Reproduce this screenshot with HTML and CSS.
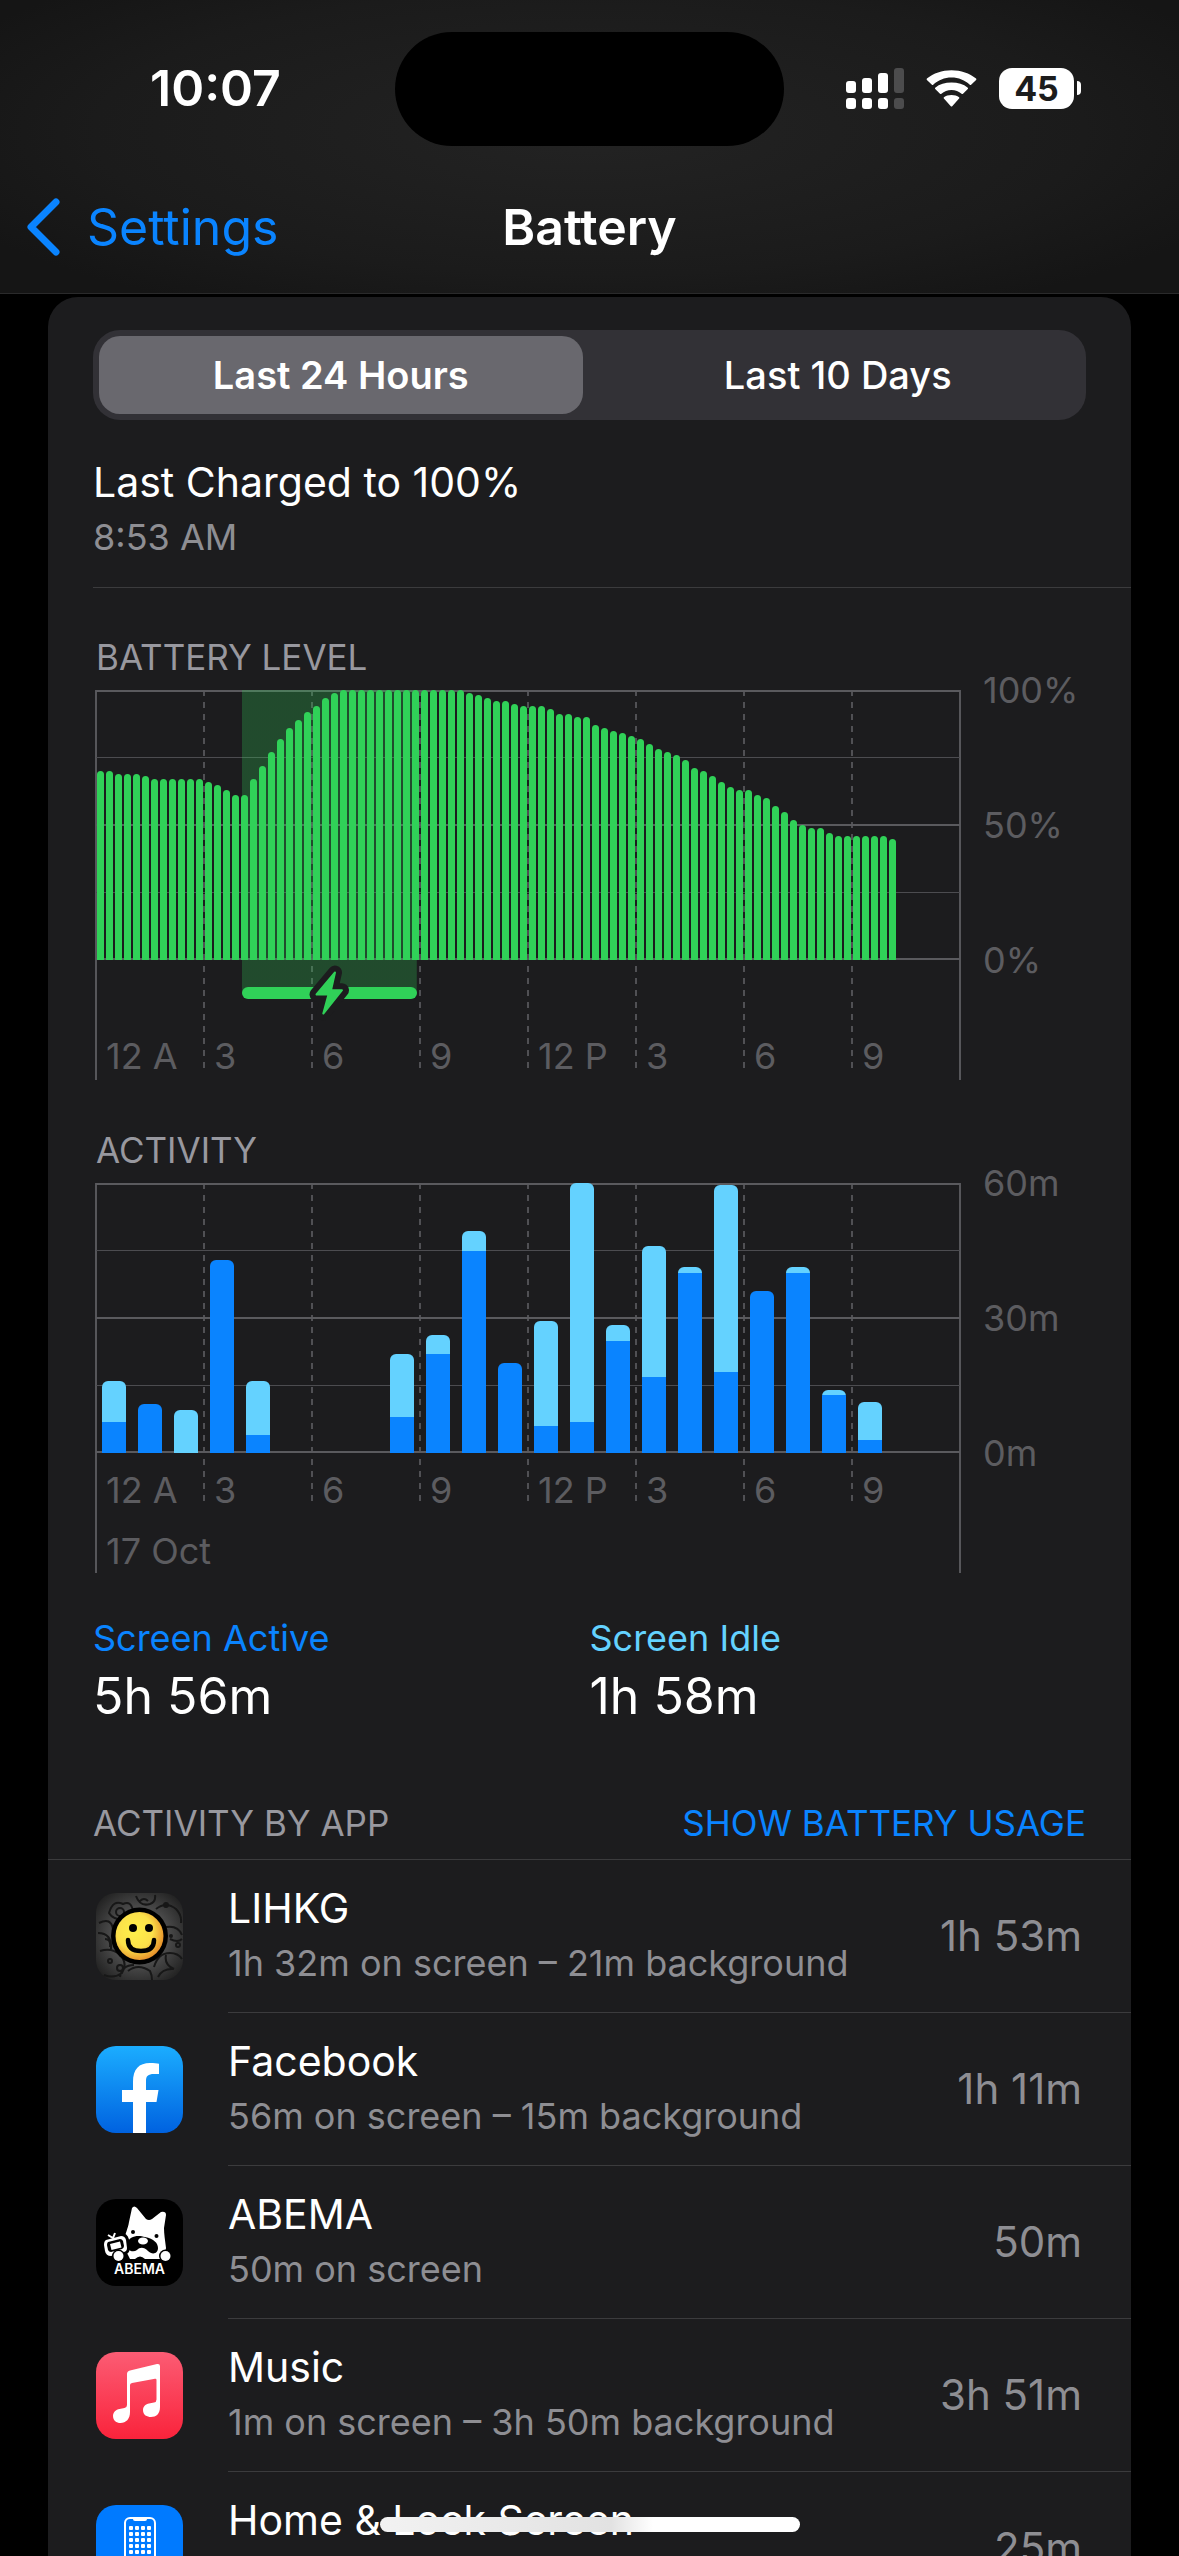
FILE: index.html
```html
<!DOCTYPE html>
<html lang="en">
<head>
<meta charset="utf-8">
<meta name="viewport" content="width=device-width, initial-scale=1">
<title>Battery</title>
<link rel="stylesheet" href="styles.css">
</head>
<body>
<div class="screen">
  <header class="top">
    <div class="status">
      <time class="clock">10:07</time>
      <div class="island"></div>
      <div class="indicators">
        <svg class="signal" viewBox="0 0 58 41" width="58" height="41" aria-label="Cellular signal">
          <g fill="#fff">
            <rect x="0" y="13" width="10" height="12" rx="3"/><rect x="16" y="10" width="10" height="15" rx="3"/><rect x="32" y="5" width="10" height="20" rx="3"/>
            <rect x="0" y="30" width="10" height="11" rx="3"/><rect x="16" y="30" width="10" height="11" rx="3"/><rect x="32" y="30" width="10" height="11" rx="3"/>
          </g>
          <g fill="#4c4c4d"><rect x="48" y="0" width="10" height="25" rx="3"/><rect x="48" y="30" width="10" height="11" rx="3"/></g>
        </svg>
        <svg class="wifi" viewBox="0 0 51 37" width="51" height="37" aria-label="Wi-Fi">
          <g fill="#fff">
            <path d="M25.500 7.500c7 0 13.500 2.700 18.300 7.200.4.400 1 .4 1.300 0l5-4.800c.4-.4.400-1 0-1.400C43.500 3.200 35 .2 25.500.2S7.500 3.200.9 8.500c-.4.400-.4 1 0 1.400l5 4.800c.4.400 1 .4 1.300 0C12 10.200 18.500 7.500 25.500 7.500z"/>
            <path d="M25.500 20c3.900 0 7.400 1.500 10.100 3.800.4.400 1 .4 1.400 0l4.800-4.700c.4-.4.400-1 0-1.400-4.300-3.500-10-5.100-16.300-5.100S13.500 14.200 9.200 17.700c-.4.400-.4 1 0 1.400l4.800 4.700c.4.400 1 .4 1.400 0C18.100 21.500 21.600 20 25.500 20z"/>
            <path d="M33.100 28.600c.4-.4.400-1 0-1.400-1.900-1.500-4.600-2.300-7.600-2.300s-5.700.8-7.600 2.300c-.4.400-.4 1 0 1.400l6.900 7.600c.4.400 1 .4 1.400 0z"/>
          </g>
        </svg>
        <div class="battery"><span class="battery-level">45</span><span class="battery-tip"></span></div>
      </div>
    </div>
    <nav class="bar">
      <a class="back" href="#">
        <svg viewBox="0 0 34 58" width="34" height="58" aria-hidden="true"><path d="M30 4 5 29l25 25" fill="none" stroke="#0a84ff" stroke-width="7" stroke-linecap="round" stroke-linejoin="round"/></svg>
        <span>Settings</span>
      </a>
      <h1>Battery</h1>
    </nav>
  </header>

  <main class="content">
    <section class="card">
      <div class="segmented" role="group" aria-label="Period">
        <button class="segment selected" type="button">Last 24 Hours</button>
        <button class="segment" type="button">Last 10 Days</button>
      </div>

      <div class="charged">
        <p class="title">Last Charged to 100%</p>
        <p class="sub">8:53 AM</p>
      </div>

      <section class="chart level">
        <h2>BATTERY LEVEL</h2>
        <div class="chart-body">
          <div class="plot">
            <div class="hours"><span>12 A</span><span>3</span><span>6</span><span>9</span><span>12 P</span><span>3</span><span>6</span><span>9</span></div>
            <div class="area">
              <div class="charging">
                <svg class="bolt" viewBox="0 0 48 60" width="48" height="60" aria-label="Charging">
                  <g stroke-linejoin="round">
                    <path d="M30 9.500 11.500 31.500h12L18.300 50.500 37 27.200H26z" fill="#1c1c1e" stroke="#1c1c1e" stroke-width="14"/>
                    <path d="M30 9.500 11.500 31.500h12L18.300 50.500 37 27.200H26z" fill="#30d158" stroke="#30d158" stroke-width="2"/>
                  </g>
                </svg>
              </div>
              <div class="bars quarter">
                <i style="height:70%"></i><i style="height:70%"></i><i style="height:69%"></i><i style="height:69%"></i><i style="height:69%"></i><i style="height:68%"></i><i style="height:67%"></i><i style="height:67%"></i><i style="height:67%"></i><i style="height:67%"></i><i style="height:67%"></i><i style="height:67%"></i>
                <i style="height:66%"></i><i style="height:65%"></i><i style="height:63%"></i><i style="height:61%"></i><i style="height:61%"></i><i style="height:67%"></i><i style="height:72%"></i><i style="height:77%"></i><i style="height:82%"></i><i style="height:86%"></i><i style="height:89%"></i><i style="height:92%"></i>
                <i style="height:94%"></i><i style="height:97%"></i><i style="height:99%"></i><i style="height:100%"></i><i style="height:100%"></i><i style="height:100%"></i><i style="height:100%"></i><i style="height:100%"></i><i style="height:100%"></i><i style="height:100%"></i><i style="height:100%"></i><i style="height:100%"></i>
                <i style="height:100%"></i><i style="height:100%"></i><i style="height:100%"></i><i style="height:100%"></i><i style="height:100%"></i><i style="height:99%"></i><i style="height:98%"></i><i style="height:97%"></i><i style="height:96%"></i><i style="height:96%"></i><i style="height:95%"></i><i style="height:94%"></i>
                <i style="height:94%"></i><i style="height:94%"></i><i style="height:93%"></i><i style="height:91%"></i><i style="height:91%"></i><i style="height:90%"></i><i style="height:90%"></i><i style="height:87%"></i><i style="height:86%"></i><i style="height:85%"></i><i style="height:84%"></i><i style="height:83%"></i>
                <i style="height:82%"></i><i style="height:80%"></i><i style="height:78%"></i><i style="height:77%"></i><i style="height:76%"></i><i style="height:74%"></i><i style="height:71%"></i><i style="height:70%"></i><i style="height:68%"></i><i style="height:66%"></i><i style="height:64%"></i><i style="height:63%"></i>
                <i style="height:63%"></i><i style="height:61%"></i><i style="height:60%"></i><i style="height:57%"></i><i style="height:55%"></i><i style="height:52%"></i><i style="height:50%"></i><i style="height:49%"></i><i style="height:49%"></i><i style="height:47%"></i><i style="height:46%"></i><i style="height:46%"></i>
                <i style="height:46%"></i><i style="height:46%"></i><i style="height:46%"></i><i style="height:46%"></i><i style="height:45%"></i>
              </div>
            </div>
          </div>
          <div class="scale"><span>100%</span><span>50%</span><span>0%</span></div>
        </div>
      </section>

      <section class="chart activity">
        <h2>ACTIVITY</h2>
        <div class="chart-body">
          <div class="plot">
            <div class="hours"><span>12 A</span><span>3</span><span>6</span><span>9</span><span>12 P</span><span>3</span><span>6</span><span>9</span></div>
            <p class="date">17 Oct</p>
            <div class="area">
              <div class="bars hourly">
                <div><i style="height:41px"></i><b style="height:31px"></b></div>
                <div><b style="height:49px"></b></div>
                <div><i style="height:43px"></i></div>
                <div><b style="height:193px"></b></div>
                <div><i style="height:54px"></i><b style="height:18px"></b></div>
                <div></div>
                <div></div>
                <div></div>
                <div><i style="height:63px"></i><b style="height:36px"></b></div>
                <div><i style="height:19px"></i><b style="height:99px"></b></div>
                <div><i style="height:20px"></i><b style="height:202px"></b></div>
                <div><b style="height:90px"></b></div>
                <div><i style="height:105px"></i><b style="height:27px"></b></div>
                <div><i style="height:239px"></i><b style="height:31px"></b></div>
                <div><i style="height:16px"></i><b style="height:112px"></b></div>
                <div><i style="height:131px"></i><b style="height:76px"></b></div>
                <div><i style="height:6px"></i><b style="height:180px"></b></div>
                <div><i style="height:187px"></i><b style="height:81px"></b></div>
                <div><b style="height:162px"></b></div>
                <div><i style="height:6px"></i><b style="height:180px"></b></div>
                <div><i style="height:5px"></i><b style="height:58px"></b></div>
                <div><i style="height:38px"></i><b style="height:13px"></b></div>
                <div></div>
                <div></div>
              </div>
            </div>
          </div>
          <div class="scale"><span>60m</span><span>30m</span><span>0m</span></div>
        </div>
      </section>

      <dl class="totals">
        <div><dt class="active">Screen Active</dt><dd>5h 56m</dd></div>
        <div><dt class="idle">Screen Idle</dt><dd>1h 58m</dd></div>
      </dl>

      <div class="list-head">
        <h2>ACTIVITY BY APP</h2>
        <button class="toggle" type="button">SHOW BATTERY USAGE</button>
      </div>

      <ul class="apps">
        <li>
          <svg class="icon" viewBox="0 0 87 87" width="87" height="87" aria-hidden="true">
            <defs>
              <radialGradient id="lg" cx=".4" cy=".4" r=".62"><stop offset="0" stop-color="#fff04a"/><stop offset=".6" stop-color="#fbe04a"/><stop offset="1" stop-color="#e8942c"/></radialGradient>
              <radialGradient id="lb" r=".7"><stop offset=".4" stop-color="#525252"/><stop offset="1" stop-color="#161616"/></radialGradient>
            </defs>
            <rect width="87" height="87" rx="20" fill="url(#lb)"/>
            <g fill="none" stroke="#171717" stroke-width="2">
              <path d="M13 20q4-14 14-9 8-4 10 7 0 8-8 9-12 0-16-7zM40 3q4 11 14 8 6-2 5-9M60 16q10-8 20 0 6 6 5 14M3 30q12-6 14 6M2 40q14 0 13 16M4 58q12-4 20 4 8 8 2 18-8 6-18 2M32 78q10-8 22 0 2 4 2 9M58 74q4-14 16-14 8 0 12 6M70 34q12-2 16 8M74 46q8 4 12 0M24 84q2-12 14-12M62 84q4-8 14-8M9 46q6 0 5 8M70 62q-2 10 8 14M44 8q4-4 8 0"/>
              <circle cx="24" cy="19" r="4"/><circle cx="14" cy="68" r="2"/><circle cx="24" cy="75" r="3"/><circle cx="75" cy="43" r="1"/><circle cx="70" cy="12" r="2"/><circle cx="82" cy="52" r="2"/>
            </g>
            <circle cx="43.500" cy="43" r="28.500" fill="#000"/>
            <circle cx="43.500" cy="43" r="24" fill="url(#lg)"/>
            <circle cx="37" cy="35" r="4"/><circle cx="53" cy="35" r="4"/>
            <path d="M32 47q0 11 13 11 13 0 13-11" fill="none" stroke="#000" stroke-width="4.500" stroke-linecap="round"/>
          </svg>
          <div class="app"><p class="title">LIHKG</p><p class="sub">1h 32m on screen – 21m background</p></div>
          <span class="value">1h 53m</span>
        </li>
        <li>
          <svg class="icon" viewBox="0 0 87 87" width="87" height="87" aria-hidden="true">
            <defs><linearGradient id="fb" x2="0" y2="1"><stop offset="0" stop-color="#1badff"/><stop offset="1" stop-color="#0062e0"/></linearGradient></defs>
            <rect width="87" height="87" rx="20" fill="url(#fb)"/>
            <path d="M37 87V56H26V44h11v-8c0-13 6-19 17-19 4 0 7 .4 9 .8V28h-5c-6 0-8 2-8 7v9h12.500l-2 12H50v31z" fill="#fff"/>
          </svg>
          <div class="app"><p class="title">Facebook</p><p class="sub">56m on screen – 15m background</p></div>
          <span class="value">1h 11m</span>
        </li>
        <li>
          <svg class="icon" viewBox="0 0 87 87" width="87" height="87" aria-hidden="true">
            <rect width="87" height="87" rx="20" fill="#000"/>
            <path d="M29 40c0-6 3-10 4-17L36 9q2-3 5 0l9 11q3 2 6 0l9-7q5-1 5 3l-2 13c0 6 1 12 2 20l-2 11H34l-4-8z" fill="#fff"/>
            <path d="M31 45c2-9 12-9 18-7 9 2 13 6 13 11 0 6-6 7-10 3-4-4-8-4-11-1-4 3-10 1-10-6z"/>
            <ellipse cx="47" cy="42" rx="5" ry="3.500" fill="#fff"/>
            <circle cx="37" cy="33" r="2"/><circle cx="60.500" cy="37" r="2"/>
            <path d="M39 60q5-5 10 0z"/>
            <path d="m10 41 15-4q4 0 5 4l1 8q0 3-3 4l-13 4q-5 0-6-5l-1-6q0-4 2-5z" fill="#fff" stroke="#000" stroke-width="6" paint-order="stroke"/>
            <path d="m12 43 12-3q2 0 3 2l1 5q0 2-2 3l-11 3q-2 0-3-2l-1-5q0-2 1-3z"/>
            <path d="m14 45 10-2.500 1.500 6-10 2.500z" fill="#fff"/>
            <path d="m12 36 5 3 2-5" fill="none" stroke="#fff" stroke-width="2"/>
            <circle cx="22.500" cy="57" r="6.500" fill="#000"/><circle cx="69.500" cy="57" r="6.500" fill="#000"/>
            <circle cx="22.500" cy="57" r="5" fill="#fff"/><circle cx="69.500" cy="57" r="5" fill="#fff"/>
            <text x="43.500" y="75" text-anchor="middle" font-family="Inter, sans-serif" font-size="14" font-weight="600" fill="#fff">ABEMA</text>
          </svg>
          <div class="app"><p class="title">ABEMA</p><p class="sub">50m on screen</p></div>
          <span class="value">50m</span>
        </li>
        <li>
          <svg class="icon" viewBox="0 0 87 87" width="87" height="87" aria-hidden="true">
            <defs><linearGradient id="mu" x2="0" y2="1"><stop offset="0" stop-color="#fb5c74"/><stop offset="1" stop-color="#fa233b"/></linearGradient></defs>
            <rect width="87" height="87" rx="20" fill="url(#mu)"/>
            <path d="M34 18.500 61 12q3-.6 3 2.300V55c0 7-4 10-9 10-4 0-8-2-8-7 0-4 3-6 6-6.600l5-1q2.500-.5 2.500-3V28q0-1.500-1.500-1.200L36 31q-2 .4-2 2v27c0 7-4 11-9.500 11-4 0-7.500-2.500-7.500-7 0-4 3-6.500 6.500-7.100l5-1Q31 55.500 31 53V22q0-3 3-3.500z" fill="#fff"/>
          </svg>
          <div class="app"><p class="title">Music</p><p class="sub">1m on screen – 3h 50m background</p></div>
          <span class="value">3h 51m</span>
        </li>
        <li>
          <svg class="icon" viewBox="0 0 87 87" width="87" height="87" aria-hidden="true">
            <defs><pattern id="dots" x="33" y="21" width="6" height="6" patternUnits="userSpaceOnUse"><rect width="4" height="4" rx="1" fill="#fff"/></pattern></defs>
            <rect width="87" height="87" rx="20" fill="#007aff"/>
            <rect x="29" y="13" width="30" height="60" rx="5" fill="none" stroke="#fff" stroke-width="2"/>
            <path d="M37 12h14v2q0 2-2 2H39q-2 0-2-2z" fill="#fff"/>
            <rect x="33" y="21" width="22" height="46" fill="url(#dots)"/>
          </svg>
          <div class="app"><p class="title">Home &amp; Lock Screen</p></div>
          <span class="value">25m</span>
        </li>
      </ul>
    </section>
  </main>
  <div class="home-indicator"></div>
</div>
</body>
</html>
```
FILE: styles.css
```css
* { box-sizing: border-box; }
body { margin: 0; background: #000; color: #fff; font-family: Inter, "Liberation Sans", sans-serif; }
h1, h2, p, dl, dd, ul { margin: 0; padding: 0; font-weight: 400; }
button { border: 0; padding: 0; background: none; color: inherit; font: inherit; cursor: pointer; }

.screen { display: flex; flex-direction: column; height: 100vh; overflow: hidden; }

/* status bar and navigation */
.top {
  flex: none;
  border-bottom: 1px solid #2a2a2b;
  background: radial-gradient(ellipse 60% 70% at 50% 45%, #232323, #1b1b1b 70%, #151515);
}
.status { display: grid; grid-template-columns: 1fr 389px 1fr; align-items: center; padding-top: 32px; }
.clock { justify-self: center; padding-left: 36px; margin-bottom: 2px; font-size: 50px; line-height: 60px; font-weight: 600; }
.island { height: 114px; border-radius: 57px; background: #000; }
.indicators { display: flex; align-items: center; justify-content: flex-end; gap: 22px; padding-right: 98px; margin-bottom: 2px; }
.battery { display: flex; align-items: center; gap: 3px; }
.battery-level { width: 75px; height: 41px; border-radius: 13px; background: #fff; color: #1c1c1c; font-size: 34px; line-height: 41px; font-weight: 700; text-align: center; }
.battery-tip { width: 4px; height: 14px; border-radius: 0 4px 4px 0; background: #fff; }
.bar { display: grid; grid-template-columns: 1fr auto 1fr; align-items: center; height: 147px; padding: 14px 26px 0; }
.back { display: flex; align-items: center; gap: 27px; color: #0a84ff; font-size: 50px; line-height: 60px; text-decoration: none; }
.bar h1 { font-size: 50px; line-height: 60px; font-weight: 600; }

/* card */
.content { flex: 1; min-height: 0; overflow-y: auto; scrollbar-width: none; padding: 3px 48px 0; }
.card { border-radius: 30px; background: #1c1c1e; padding-top: 33px; }
.segmented { display: grid; grid-template-columns: 1fr 1fr; margin: 0 45px; padding: 6px; height: 90px; border-radius: 27px; background: #323136; }
.segment { padding-left: 6px; border-radius: 21px; font-size: 38px; line-height: 48px; font-weight: 500; }
.segment.selected { padding-left: 0; margin-right: 7px; background: #69686e; font-weight: 600; }

.title { font-size: 41px; line-height: 54px; }
.sub { margin-top: 4px; font-size: 36px; line-height: 48px; color: #8e8e93; }
.charged { margin-left: 45px; padding: 35px 0 26px; border-bottom: 1px solid #3b3b3d; }

/* charts */
.chart h2, .list-head h2, .toggle { font-size: 35px; line-height: 48px; }
.chart h2, .list-head h2 { color: #98989f; }
.chart h2 { padding-left: 48px; }
.level h2 { margin-top: 45px; margin-bottom: 9px; }
.activity h2 { margin-top: 46px; margin-bottom: 9px; }
.chart-body { display: grid; grid-template-columns: minmax(0, 1fr) 148px; column-gap: 22px; padding-left: 47px; font-size: 36px; line-height: 48px; color: #5c5c60; }
.plot {
  position: relative; height: 390px;
  background:
    linear-gradient(#56565a, #56565a) left / 2px 100% no-repeat,
    linear-gradient(#56565a, #56565a) right / 2px 100% no-repeat;
}
.hours { display: grid; grid-template-columns: repeat(8, 1fr); margin-right: 2px; }
.hours span { padding-left: 11px; }
.hours span + span { background: repeating-linear-gradient(#505054 0 6px, transparent 6px 12px) left / 2px 100% no-repeat; }
.level .hours span { padding-top: 342px; height: 384px; }
.activity .hours span { padding-top: 283px; height: 324px; }
.date { padding: 20px 0 0 11px; }
.area {
  position: absolute; inset: 0 1px auto; height: 270px;
  background:
    linear-gradient(#5a5a5e, #5a5a5e) 0 0 / 100% 2px no-repeat,
    linear-gradient(#4c4c50, #4c4c50) 0 25% / 100% 1px no-repeat,
    linear-gradient(#5a5a5e, #5a5a5e) 0 50% / 100% 2px no-repeat,
    linear-gradient(#4c4c50, #4c4c50) 0 75% / 100% 1px no-repeat,
    linear-gradient(#5a5a5e, #5a5a5e) 0 100% / 100% 2px no-repeat;
}
.bars { position: absolute; inset: 0; display: grid; align-items: end; }
.quarter { grid-template-columns: repeat(96, 1fr); }
.quarter i { margin: 0 1px; border-radius: 4px 4px 0 0; background: #30d158; }
.hourly { grid-template-columns: repeat(24, 1fr); }
.hourly div { display: flex; flex-direction: column; margin: 0 6px; border-radius: 6px 6px 0 0; overflow: hidden; }
.hourly i { background: #64d2ff; }
.hourly b { background: #0a84ff; }
.charging {
  position: absolute; top: 0; left: 16.900%; width: 20.200%; height: 309px;
  display: flex; align-items: flex-end; justify-content: center;
  background: linear-gradient(rgba(48, 209, 88, .26), rgba(48, 209, 88, .26)) top / 100% 303px no-repeat;
}
.charging::before { content: ""; position: absolute; inset: auto 0 0; height: 12px; border-radius: 6px; background: #30d158; }
.bolt { position: relative; flex: none; margin-bottom: -24px; overflow: visible; }
.scale { display: flex; flex-direction: column; justify-content: space-between; height: 318px; margin-top: -24px; }

/* totals */
.totals { display: grid; grid-template-columns: 1fr 1fr; margin: 41px 45px 0; }
.totals dt { font-size: 36px; line-height: 48px; }
.totals dd { font-size: 50px; line-height: 60px; margin-top: 4px; }
.active { color: #0a84ff; }
.idle { color: #64d2ff; }

/* app list */
.list-head { display: flex; justify-content: space-between; margin-top: 73px; padding: 0 45px 12px; border-bottom: 1px solid #3b3b3d; }
.toggle { color: #0a84ff; }
.apps { list-style: none; }
.apps li { display: grid; grid-template-columns: 87px 1fr auto; column-gap: 45px; align-items: center; height: 153px; padding: 0 0 0 48px; }
.app { align-self: stretch; padding-top: 21px; border-bottom: 1px solid #3b3b3d; }
.app .title, .app .sub { white-space: nowrap; }
.value { align-self: stretch; margin-left: -45px; padding-right: 49px; border-bottom: 1px solid #3b3b3d; color: #8e8e93; font-size: 42px; line-height: 152px; }

.home-indicator { position: fixed; left: 50%; bottom: 24px; width: 420px; height: 15px; margin-left: -210px; border-radius: 8px; background: linear-gradient(90deg, #f2f2f2, #e2e2e2 55%, #fff 65%); }
```
